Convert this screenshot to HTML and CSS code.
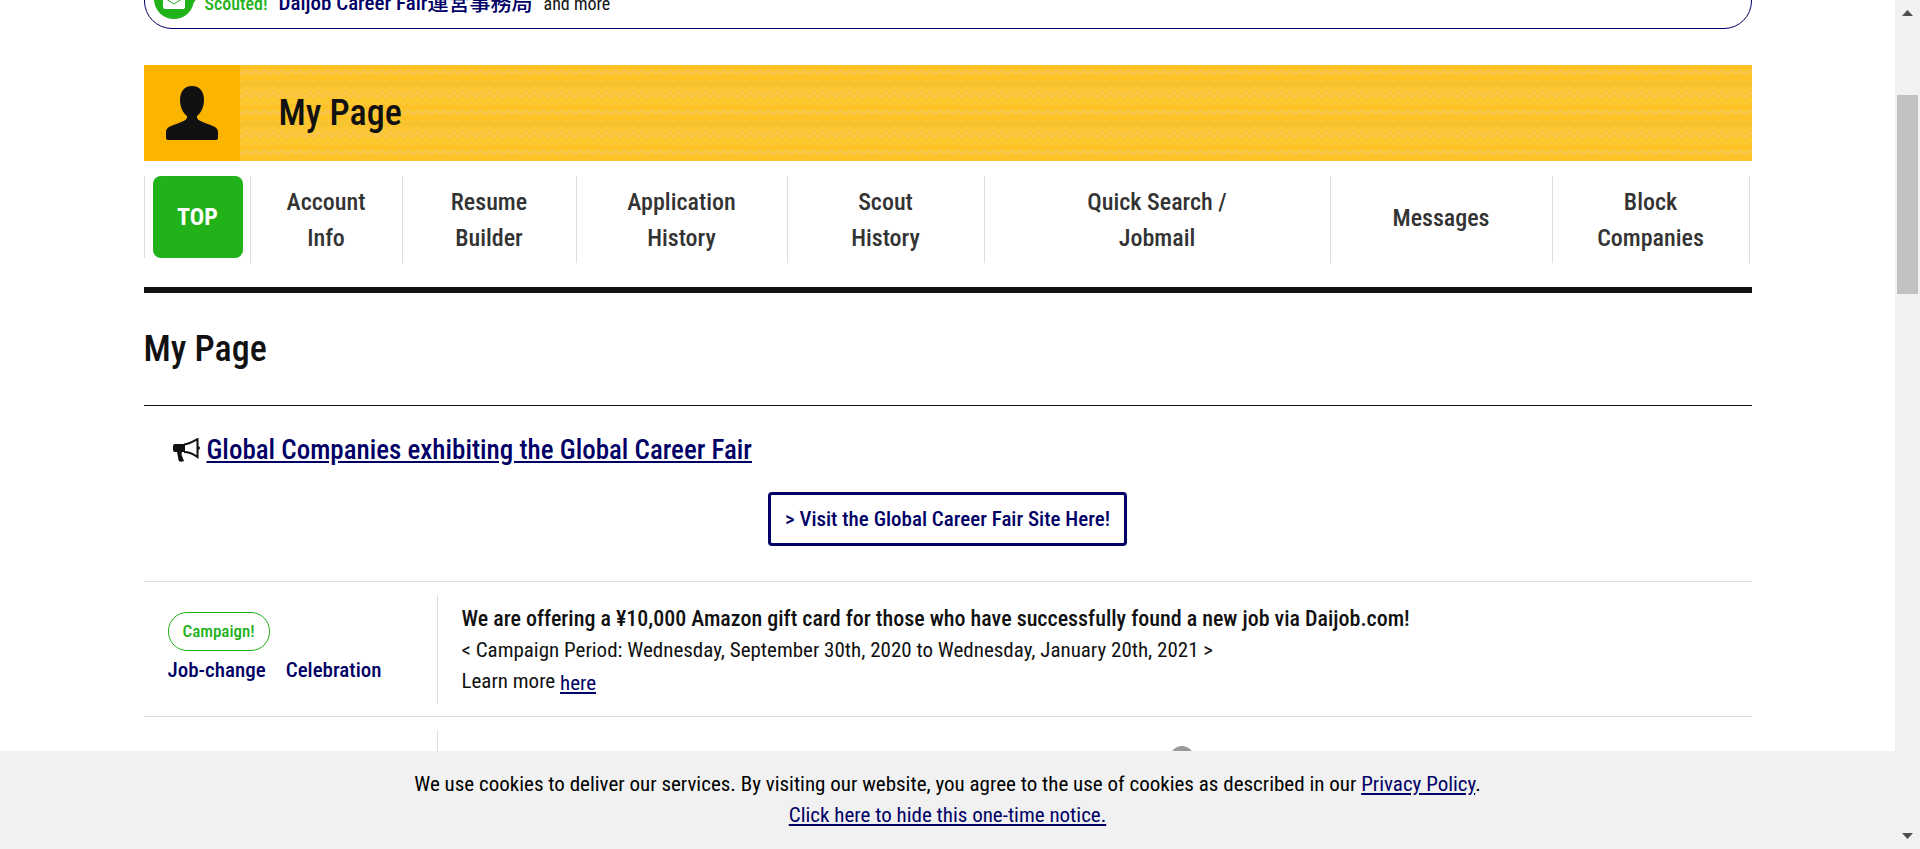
FILE: index.html
```
<!DOCTYPE html>
<html lang="en">
<head>
<meta charset="utf-8">
<title>My Page</title>
<link rel="stylesheet" href="styles.css">
</head>
<body>
<div class="viewport">
  <main class="page">
    <div class="scout">
      <svg class="scout-icon" width="48" height="42" viewBox="0 0 48 42" aria-hidden="true">
        <circle cx="21" cy="21" r="20" fill="#21b21a"/>
        <path d="M34 18H46L38 28Z" fill="#21b21a"/>
        <rect x="10" y="12" width="22" height="19" rx="2" fill="#fff"/>
        <path d="m10 19 11 7 11-7" fill="none" stroke="#21b21a"/>
      </svg>
      <span class="scout-label">Scouted!</span>
      <a class="scout-name" href="#">Daijob Career Fair運営事務局</a>
      <span class="scout-more">and more</span>
    </div>

    <header class="banner">
      <div class="banner-icon">
        <svg width="52" height="54" viewBox="0 0 52 54" aria-hidden="true">
          <path d="M26 0C18 0 14 6 14 14c0 7 3 13 7 16v2c-1 2-4 3.500-8 5C6 39.500 0 41 0 46v6q0 2 2 2h48q2 0 2-2v-6c0-5-6-6.500-13-9-4-1.500-7-3-8-5v-2c4-3 7-9 7-16C38 6 34 0 26 0Z" fill="#111"/>
        </svg>
      </div>
      <div class="banner-body">
        <svg class="banner-pattern" width="100%" height="100%" aria-hidden="true">
          <defs>
            <pattern id="waves" width="9" height="40" patternUnits="userSpaceOnUse">
              <rect width="9" height="40" fill="#fcc42e"/>
              <g fill="none" stroke-width="2">
                <path d="M-1 1 2 4 6.500 0 10 3" stroke="#ffc020"/>
                <path d="M-1 7 2 9 6.500 6 10 8" stroke="#f8c552"/>
                <path d="M-1 12 2 14 6.500 11 10 13" stroke="#ffc11d"/>
                <path d="M-1 18 2 20 6.500 17 10 19" stroke="#f2c331"/>
                <path d="M-1 24 2 26 6.500 23 10 25" stroke="#fdc83a"/>
                <path d="M-1 29 2 32 6.500 27 10 31" stroke="#f8c750"/>
                <path d="M-1 36 2 38 6.500 35 10 37" stroke="#fecb2c"/>
              </g>
            </pattern>
          </defs>
          <rect width="100%" height="100%" fill="url(#waves)"/>
        </svg>
        <h1 class="banner-title">My Page</h1>
      </div>
    </header>

    <nav class="menu">
      <div class="menu-top"><a class="top-link" href="#">TOP</a></div>
      <a class="menu-item" href="#">Account<br>Info</a>
      <a class="menu-item" href="#">Resume<br>Builder</a>
      <a class="menu-item" href="#">Application<br>History</a>
      <a class="menu-item" href="#">Scout<br>History</a>
      <a class="menu-item" href="#">Quick Search /<br>Jobmail</a>
      <a class="menu-item single" href="#">Messages</a>
      <a class="menu-item" href="#">Block<br>Companies</a>
    </nav>

    <h2 class="heading">My Page</h2>

    <section class="fair">
      <h3 class="fair-title">
        <svg width="27" height="24" viewBox="0 0 27 24" aria-hidden="true">
          <path d="M2 6h10v8H9q-1 2 0 4l2 5q-5 2-5.500-1L4 14H2q-2 0-2-2V8q0-2 2-2Z" fill="#111"/>
          <path d="M11 6.500C16 6 21 3 24.500 1v18c-4-3-8-5-13.500-5" fill="none" stroke="#111" stroke-width="2"/>
          <path d="M25 8q2 .5 2 2t-2 2Z" fill="#111"/>
        </svg>
        <a href="#">Global Companies exhibiting the Global Career Fair</a>
      </h3>
      <a class="fair-button" href="#">&gt; Visit the Global Career Fair Site Here!</a>
    </section>

    <section class="row">
      <div class="row-side">
        <span class="pill">Campaign!</span>
        <div class="side-links"><span>Job-change</span><span>Celebration</span></div>
      </div>
      <div class="row-body">
        <h4>We are offering a ¥10,000 Amazon gift card for those who have successfully found a new job via Daijob.com!</h4>
        <p>&lt; Campaign Period: Wednesday, September 30th, 2020 to Wednesday, January 20th, 2021 &gt;</p>
        <p>Learn more <a class="here" href="#">here</a></p>
      </div>
    </section>

    <section class="row">
      <div class="row-side"></div>
      <div class="row-body"><span class="dot"></span></div>
    </section>
  </main>

  <footer class="cookies">
    <p>We use cookies to deliver our services. By visiting our website, you agree to the use of cookies as described in our <a href="#">Privacy Policy</a>.</p>
    <p><a href="#">Click here to hide this one-time notice.</a></p>
  </footer>
</div>
<div class="scrollbar" aria-hidden="true">
  <svg width="11" height="6" viewBox="0 0 11 6"><path d="M0 6 5.500 0 11 6Z" fill="#505050"/></svg>
  <div class="track"><div class="thumb"></div></div>
  <svg width="11" height="6" viewBox="0 0 11 6"><path d="M0 0 5.500 6 11 0Z" fill="#505050"/></svg>
</div>
</body>
</html>
```
FILE: styles.css
```
* { box-sizing: border-box; }
body {
  margin: 0;
  height: 100vh;
  overflow: hidden;
  display: flex;
  background: #fff;
  color: #111;
  font: 21px/31px "Roboto Condensed", Roboto, "Noto Sans CJK JP", sans-serif;
}
h1, h2, h3, h4, p { margin: 0; }
a { color: #006; }
.viewport {
  flex: 1;
  min-width: 0;
  height: 100vh;
  display: flex;
  flex-direction: column;
}
.page {
  flex: 1;
  min-height: 0;
  width: 100%;
  max-width: 1656px;
  margin: 0 auto;
  padding: 0 24px;
  overflow: hidden;
}
.scout {
  display: flex;
  align-items: center;
  height: 58px;
  margin-top: -29px;
  padding: 6px 0 0 8px;
  border: 1px solid #006;
  border-radius: 28px;
}
.scout-icon { flex: none; margin-top: -8px; }
.scout-label { margin-left: 4px; color: #21b21a; font-size: 18px; font-weight: 500; }
.scout-name { margin-left: 11px; font-size: 21px; font-weight: 500; text-decoration: none; }
.scout-more { margin-left: 11px; font-size: 18px; }

.banner { display: flex; margin-top: 36px; height: 96px; }
.banner-icon {
  width: 96px;
  display: flex;
  align-items: center;
  justify-content: center;
  background: #fbb500;
}
.banner-body { flex: 1; position: relative; display: flex; align-items: center; padding-left: 39px; }
.banner-pattern { position: absolute; inset: 0; }
.banner-title { position: relative; font-size: 36px; line-height: 48px; font-weight: 500; }

.menu {
  display: grid;
  grid-template-columns: 106fr 152fr 174fr 211fr 197fr 346fr 222fr 198fr;
  align-items: start;
  padding: 15px 2px 24px 0;
  border-bottom: 6px solid #111;
}
.menu-top {
  display: flex;
  padding: 0 7px 0 8px;
  border-left: 1px solid #ddd;
}
.top-link {
  flex: 1;
  height: 82px;
  display: flex;
  align-items: center;
  justify-content: center;
  border-radius: 8px;
  background: #21b21a;
  color: #fff;
  font-size: 24px;
  font-weight: 700;
  text-decoration: none;
}
.menu-item {
  height: 87px;
  display: flex;
  align-items: center;
  justify-content: center;
  border-left: 1px solid #ddd;
  color: #333;
  font-size: 24px;
  line-height: 36px;
  font-weight: 500;
  text-align: center;
  text-decoration: none;
}
.menu-item:last-child { border-right: 1px solid #ddd; }
.single { padding-bottom: 4px; }

.heading {
  padding: 32px 0;
  border-bottom: 1px solid #111;
  font-size: 36px;
  line-height: 48px;
  font-weight: 500;
}
.fair {
  display: flex;
  flex-direction: column;
  padding: 24px 29px 35px;
  border-bottom: 1px solid #ddd;
}
.fair-title {
  display: flex;
  align-items: center;
  gap: 7px;
  font-size: 27px;
  line-height: 40px;
  font-weight: 500;
}
.fair-button {
  align-self: center;
  margin-top: 22px;
  padding: 9px 14px;
  border: 3px solid #006;
  border-radius: 4px;
  font-size: 21px;
  line-height: 30px;
  font-weight: 500;
  text-decoration: none;
}
.row { display: flex; padding: 13px 0 12px; border-bottom: 1px solid #ddd; }
.row-side { width: 294px; padding: 17px 24px 16px; border-right: 1px solid #ddd; }
.pill {
  display: inline-block;
  padding: 3px 14px;
  border: 1px solid #21b21a;
  border-radius: 19px;
  color: #21b21a;
  font-size: 17px;
  font-weight: 500;
}
.side-links { display: flex; gap: 20px; margin-top: 4px; color: #006; font-size: 21px; font-weight: 500; }
.row-body { flex: 1; padding: 8px 24px 5px; }
.row-body h4 { font-size: 22px; line-height: 32px; font-weight: 500; }
.here { vertical-align: -2px; }
.dot { display: block; width: 24px; height: 24px; margin: 8px 0 0 56%; border-radius: 12px; background: #999; }

.cookies {
  flex: none;
  padding: 18px 24px;
  background: #f1f1f1;
  color: #000;
  text-align: center;
}
.scrollbar {
  flex: none;
  width: 25px;
  display: flex;
  flex-direction: column;
  align-items: center;
  padding: 10px 0;
  background: #f1f1f1;
}
.track { flex: 1; width: 21px; padding-top: 79px; }
.thumb { height: 199px; background: #c1c1c1; }
```
